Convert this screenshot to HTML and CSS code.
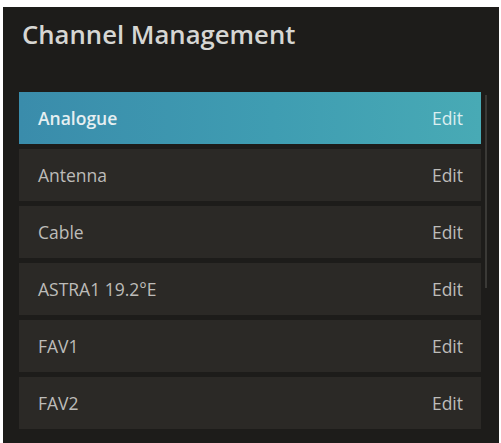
FILE: index.html
```html
<!DOCTYPE html>
<html lang="en">
<head>
<meta charset="utf-8">
<title>Channel Management</title>
<link rel="stylesheet" href="styles.css">
</head>
<body>
<div class="panel">
  <h1 class="title">Channel Management</h1>
  <ul class="list">
    <li class="row active"><span class="name">Analogue</span><span class="edit">Edit</span></li>
    <li class="row"><span class="name">Antenna</span><span class="edit">Edit</span></li>
    <li class="row"><span class="name">Cable</span><span class="edit">Edit</span></li>
    <li class="row"><span class="name">ASTRA1 19.2°E</span><span class="edit">Edit</span></li>
    <li class="row"><span class="name">FAV1</span><span class="edit">Edit</span></li>
    <li class="row"><span class="name">FAV2</span><span class="edit">Edit</span></li>
  </ul>
  <div class="scrollbar"></div>
</div>
</body>
</html>
```

FILE: styles.css
```css
html, body {
  margin: 0;
  padding: 0;
  background: #ffffff;
}

body {
  font-family: "Open Sans", "Liberation Sans", sans-serif;
  padding: 7px 2px 0 3px;
  height: 443px;
  box-sizing: border-box;
  overflow: hidden;
}

.panel {
  position: relative;
  background: #1d1c1a;
  height: 436px;
  padding: 0 18px 0 16px;
  display: flex;
  flex-direction: column;
}

.title {
  margin: 12px 0 0 3px;
  font-size: 25.7px;
  font-weight: 600;
  line-height: 32px;
  color: #d6d6d3;
}

.list {
  list-style: none;
  margin: 41px 0 0 0;
  padding: 0;
  display: flex;
  flex-direction: column;
  gap: 5px;
}

.row {
  height: 52px;
  display: flex;
  align-items: center;
  justify-content: space-between;
  padding: 0 18px 0 19px;
  background: #2b2926;
  color: #bdbcb9;
  font-size: 17.5px;
}

.row.active {
  background: linear-gradient(90deg, #3a8cab 0%, #3f9db2 55%, #48aab5 100%);
  color: #e6eff1;
  font-weight: 600;
}

.row.active .edit {
  font-weight: 400;
  color: #dbeef0;
}

.scrollbar {
  position: absolute;
  left: 482px;
  top: 88px;
  width: 2px;
  height: 193px;
  background: #3a3936;
}
```
